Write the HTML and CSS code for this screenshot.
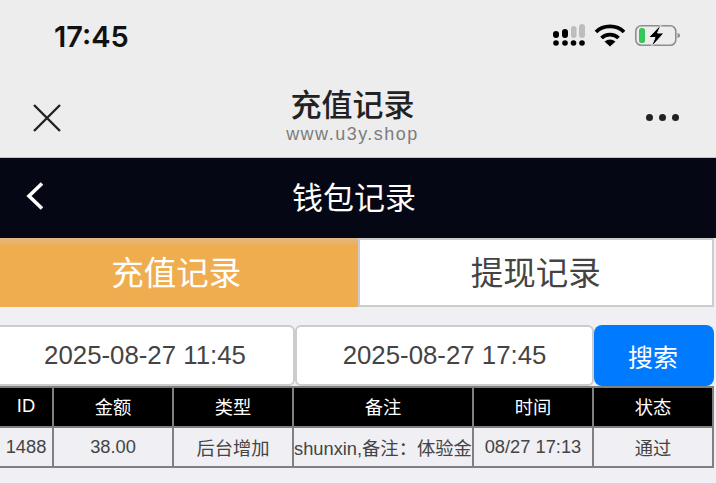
FILE: index.html
```html
<!DOCTYPE html>
<html lang="zh-CN">
<head>
  <meta charset="UTF-8" />
  <meta name="viewport" content="width=device-width, initial-scale=1.0">
  <title>充值记录</title>
  <link rel="stylesheet" href="styles.css">
</head>
<body>
  <div class="status-bar">
    <span class="clock">17:45</span>
    <div class="status-icons">
      <svg width="34" height="24" viewBox="0 0 34 24" fill="#000">
        <rect x="2" y="7" width="6" height="7" rx="3"/>
        <rect x="11" y="5" width="6" height="9" rx="3"/>
        <rect x="20" y="2" width="5.500" height="12" rx="2.750" fill="#bdbdbd"/>
        <rect x="28" y="0" width="6" height="14" rx="3" fill="#bdbdbd"/>
        <circle cx="5" cy="19" r="2.800"/>
        <circle cx="14" cy="19" r="2.800"/>
        <circle cx="22.500" cy="19" r="2.800"/>
        <circle cx="31" cy="19" r="2.800"/>
      </svg>
      <svg width="32" height="24" viewBox="0 0 32 24" fill="none" stroke="#000" stroke-width="3.800">
        <path d="M2 8C9 0.500 23 0.500 30 8"/>
        <path d="M7.500 14C12 9.500 20 9.500 24.500 14"/>
        <path d="M16 22.500L10.500 17.500Q16 13.500 21.500 17.500Z" fill="#000" stroke="none"/>
      </svg>
      <svg width="46" height="24" viewBox="0 0 46 24" fill="none">
        <rect x="0.800" y="1.800" width="40" height="19.500" rx="5.500" stroke="#8e8e8e" stroke-width="1.600"/>
        <rect x="4" y="4" width="6" height="15" rx="2.500" fill="#34c759"/>
        <path d="M42.500 9C44.500 9.500 45 10.500 45 11.500C45 12.500 44.500 13.500 42.500 14Z" fill="#8e8e8e"/>
        <path d="M26.500 0L13.500 13.500H20L16 23.500L29 9H22.500Z" fill="#000" stroke="#ededed" stroke-width="1"/>
      </svg>
    </div>
  </div>

  <div class="web-nav">
    <svg class="close-icon" width="30" height="30" viewBox="0 0 30 30" stroke="#222" stroke-width="2.400" fill="none">
      <path d="M2 2L28 28M28 2L2 28"/>
    </svg>
    <div class="web-title">
      <div class="web-name">充值记录</div>
      <div class="web-url">www.u3y.shop</div>
    </div>
    <div class="more-dots"><i></i><i></i><i></i></div>
  </div>

  <div class="page-head">
    <svg class="back-icon" width="20" height="30" viewBox="0 0 20 30" stroke="#fff" stroke-width="3.600" fill="none">
      <path d="M17 2.500L4 15L17 27.500"/>
    </svg>
    <h1>钱包记录</h1>
  </div>

  <div class="tabs">
    <div class="tab active">充值记录</div>
    <div class="tab">提现记录</div>
  </div>

  <div class="search-row">
    <input class="date-input" type="text" value="2025-08-27 11:45">
    <input class="date-input" type="text" value="2025-08-27 17:45">
    <button class="search-btn">搜索</button>
  </div>

  <table class="records">
    <colgroup>
      <col class="col-id"><col class="col-std"><col class="col-std"><col class="col-wide"><col class="col-std"><col class="col-std">
    </colgroup>
    <thead>
      <tr><th>ID</th><th>金额</th><th>类型</th><th>备注</th><th>时间</th><th>状态</th></tr>
    </thead>
    <tbody>
      <tr>
        <td>1488</td>
        <td>38.00</td>
        <td>后台增加</td>
        <td class="note">shunxin,备注：体验金</td>
        <td>08/27 17:13</td>
        <td>通过</td>
      </tr>
    </tbody>
  </table>
</body>
</html>
```

FILE: styles.css
```css
:root {
  --page: #efeff4;
  --bar: #ededed;
  --dark: #050814;
  --orange: #efad4f;
  --blue: #007aff;
  --line: #808080;
  --text: #444;
}

* {
  margin: 0;
  padding: 0;
  box-sizing: border-box;
}

body {
  width: 716px;
  height: 483px;
  overflow: hidden;
  background: var(--page);
  color: var(--text);
  font-family: "Liberation Sans", "Noto Sans CJK SC", sans-serif;
}

.status-bar {
  height: 72px;
  background: var(--bar);
  display: flex;
  justify-content: space-between;
  align-items: center;
  padding: 0 35px 0 54px;
}

.clock {
  font-family: Inter, sans-serif;
  font-size: 29px;
  font-weight: 600;
  color: #111;
}

.status-icons {
  display: flex;
  align-items: center;
  gap: 9px;
}

.web-nav {
  height: 86px;
  background: var(--bar);
  border-bottom: 1px solid #c4c4c6;
  display: flex;
  justify-content: space-between;
  align-items: center;
  padding: 0 37px 0 32px;
}

.close-icon {
  margin-top: 6px;
}

.web-title {
  text-align: center;
  margin: 2px 3px 0 0;
}

.web-name {
  font-size: 31px;
  line-height: 37px;
  font-weight: 500;
  color: #222;
}

.web-url {
  font-size: 18px;
  line-height: 20px;
  letter-spacing: 1.500px;
  color: #7c7c7c;
}

.more-dots {
  display: flex;
  gap: 6px;
  margin-top: 6px;
}

.more-dots i {
  width: 7px;
  height: 7px;
  border-radius: 50%;
  background: #222;
}

.page-head {
  height: 80px;
  background: var(--dark);
  display: flex;
  align-items: center;
  justify-content: center;
  position: relative;
}

.page-head h1 {
  font-size: 31px;
  font-weight: 400;
  color: #fff;
  margin: 0 8px 6px 0;
}

.back-icon {
  position: absolute;
  left: 25px;
  top: 23px;
}

.tabs {
  display: flex;
  width: 714px;
  height: 69px;
}

.tab {
  flex: 1;
  display: flex;
  align-items: center;
  justify-content: center;
  padding-bottom: 4px;
  font-size: 32.500px;
  background: #fff;
  border: 2px solid #ccc;
  border-left-width: 1px;
  color: var(--text);
}

.tab.active {
  background: var(--orange);
  background-image: linear-gradient(#dfb985, var(--orange) 8px);
  border: none;
  border-right: 1px solid #ccc;
  padding-right: 5px;
  color: #fff;
}

.search-row {
  display: flex;
  width: 714px;
  height: 61px;
  margin-top: 18px;
}

.date-input {
  width: 299px;
  height: 61px;
  border: 2px solid #ccc;
  border-radius: 6px;
  background: #fff;
  text-align: center;
  font-family: inherit;
  font-size: 25.800px;
  color: var(--text);
}

.date-input:first-child {
  width: 300px;
  margin-left: -5px;
}

.search-btn {
  flex: 1;
  border: none;
  border-radius: 8px;
  background: var(--blue);
  padding-right: 2px;
  color: #fff;
  font-family: inherit;
  font-size: 25px;
}

.records {
  width: 713px;
  table-layout: fixed;
  border-collapse: collapse;
  font-size: 18.300px;
}

.col-id { width: 53px; }
.col-std { width: 120px; }
.col-wide { width: 180px; }

.records th,
.records td {
  height: 40px;
  border: 2px solid var(--line);
  text-align: center;
  white-space: nowrap;
  overflow: hidden;
}

.records tr > :first-child {
  border-left: none;
}

.records th {
  background: #000;
  color: #fff;
  font-weight: 400;
  padding-bottom: 2px;
}

.records td.note {
  text-align: left;
}
```
